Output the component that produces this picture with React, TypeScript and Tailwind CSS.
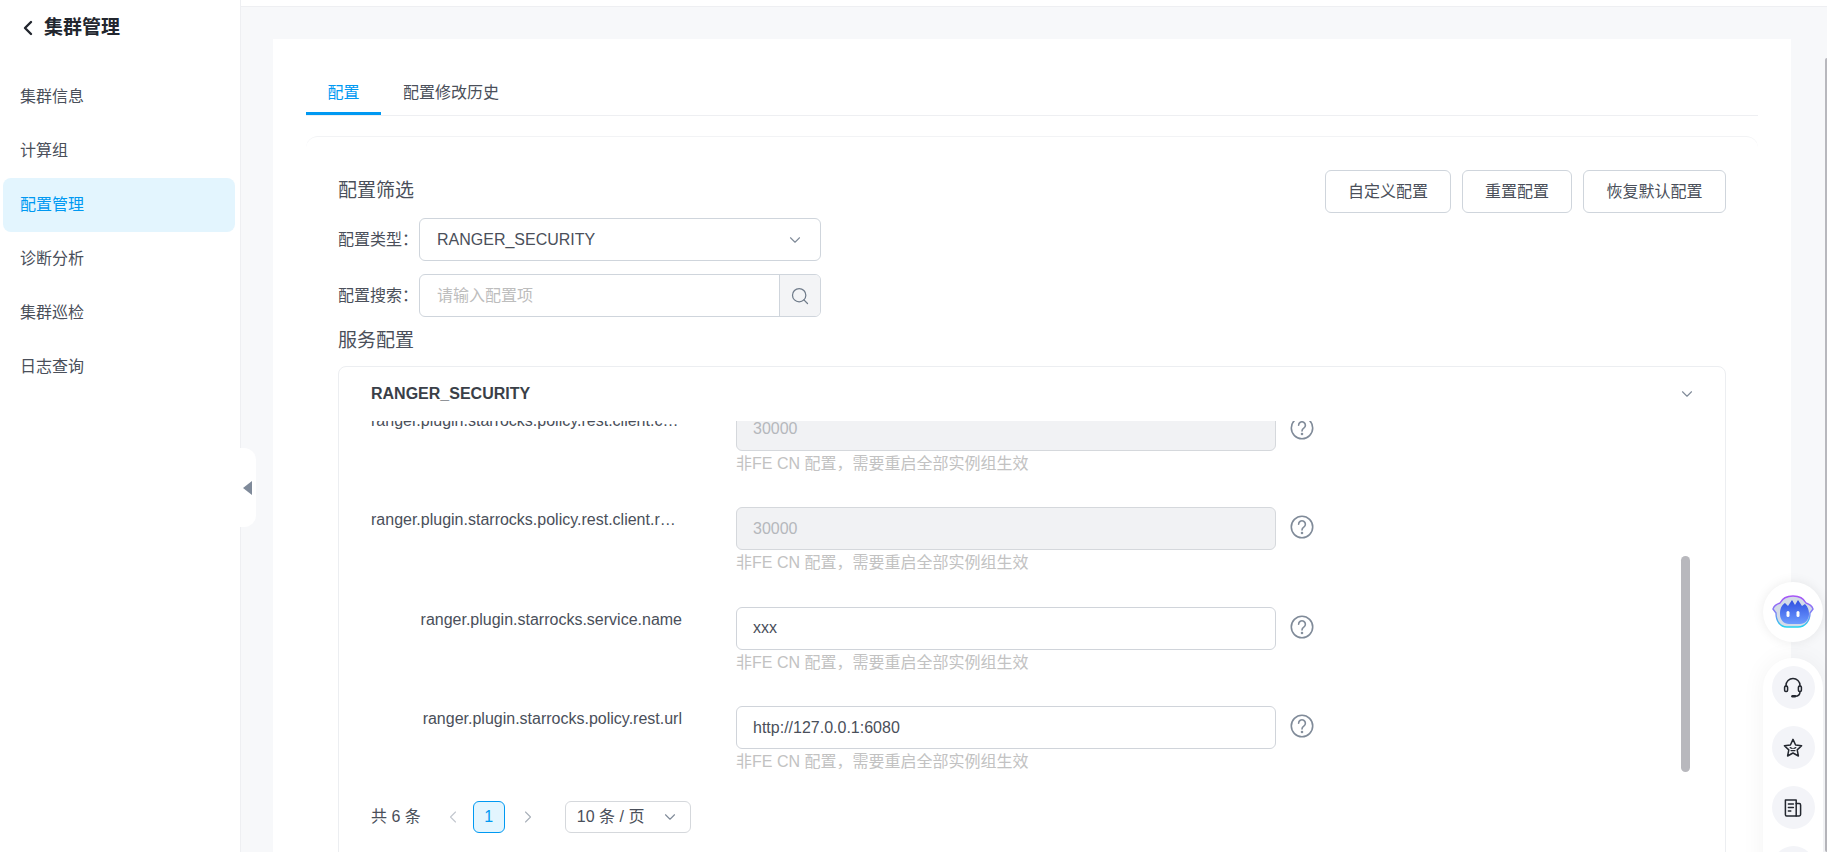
import { ChevronDown, ChevronLeft, ChevronRight, Search } from "lucide-react";

const menuItems = ["集群信息", "计算组", "配置管理", "诊断分析", "集群巡检", "日志查询"];

const configRows = [
  { name: "ranger.plugin.starrocks.policy.rest.client.connection.timeout.ms", value: "30000", disabled: true },
  { name: "ranger.plugin.starrocks.policy.rest.client.read.timeout.ms", value: "30000", disabled: true },
  { name: "ranger.plugin.starrocks.service.name", value: "xxx", disabled: false },
  { name: "ranger.plugin.starrocks.policy.rest.url", value: "http://127.0.0.1:6080", disabled: false },
];

function HelpIcon() {
  return (
    <svg width="24" height="24" viewBox="0 0 24 24" fill="none" stroke="#808b99" strokeWidth="1.6" strokeLinecap="round">
      <circle cx="12" cy="12" r="10.7" />
      <path d="M8.6 9.2a3.4 3.4 0 1 1 5.2 2.9c-1.2.8-1.8 1.4-1.8 2.9" />
      <circle cx="12" cy="18" r="0.5" fill="#808b99" />
    </svg>
  );
}

function BotLogo() {
  return (
    <svg width="42" height="34" viewBox="0 0 42 34">
      <defs>
        <linearGradient id="rim" x1="0" y1="0" x2="0" y2="1">
          <stop offset="0" stopColor="#a855f7" />
          <stop offset="0.55" stopColor="#7c83f5" />
          <stop offset="1" stopColor="#22d3ee" />
        </linearGradient>
        <linearGradient id="face" x1="0" y1="0" x2="0" y2="1">
          <stop offset="0" stopColor="#2f4fe0" />
          <stop offset="1" stopColor="#6d9bff" />
        </linearGradient>
      </defs>
      <path
        d="M21 1c6 0 11 3 13 7 3 1 6 3 7 6l-3 4c0 8-5 14-12 14H15C8 32 4 26 4 18l-3-4c1-3 4-5 7-6 2-4 7-7 13-7z"
        fill="#d3dbe8"
        stroke="url(#rim)"
        strokeWidth="1.4"
      />
      <path
        d="M8 19c0-6 2-9 5-11l3 3 4-6 3 5 3-5 4 6 3-2c3 3 4 6 4 10 0 6-4 10-9 10H17c-5 0-9-4-9-10z"
        fill="url(#face)"
      />
      <rect x="14.5" y="16" width="3" height="6" rx="1.5" fill="#fff" />
      <rect x="24.5" y="16" width="3" height="6" rx="1.5" fill="#fff" />
    </svg>
  );
}

function HeadsetIcon() {
  return (
    <svg width="22" height="22" viewBox="0 0 22 22" fill="none" stroke="#23272f" strokeWidth="1.5" strokeLinecap="round">
      <path d="M4 9.5V8.5a7 7 0 0 1 14 0v1" />
      <rect x="2.6" y="9" width="3" height="5.4" rx="1.2" />
      <rect x="16.4" y="9" width="3" height="5.4" rx="1.2" />
      <path d="M18 14.5c0 3-2 4.8-5 4.8" />
      <path d="M10.4 19.3h2.6" strokeWidth="2.4" />
    </svg>
  );
}

function StarIcon() {
  return (
    <svg width="22" height="22" viewBox="0 0 22 22" fill="none" stroke="#23272f" strokeWidth="1.5" strokeLinejoin="round" strokeLinecap="round">
      <path d="M11 2.4l2.6 5.6 6 .7-4.4 4.2 1.2 6.1L11 16l-5.4 3 1.2-6.1L2.4 8.7l6-.7z" />
      <path d="M8.2 10.6l2 .9M13.8 10.6l-2 .9M9 13.6h4" strokeWidth="1.2" />
    </svg>
  );
}

function NewsIcon() {
  return (
    <svg width="22" height="22" viewBox="0 0 22 22" fill="none" stroke="#23272f" strokeWidth="1.5" strokeLinecap="round" strokeLinejoin="round">
      <path d="M3.4 3h10.8v16H4.6a1.2 1.2 0 0 1-1.2-1.2z" />
      <path d="M14.2 6.5h3a1.4 1.4 0 0 1 1.4 1.4v9.7a1.4 1.4 0 0 1-1.4 1.4h-3" />
      <path d="M6.4 7h5M6.4 10.5h5M6.4 14h2.4" />
    </svg>
  );
}

function OutlineButton({ label, width }: { label: string; width: string }) {
  return (
    <button className={`h-[43px] ${width} rounded-md border border-[#cfd5dc] bg-white text-base text-[#4a4f5a]`}>
      {label}
    </button>
  );
}

function ConfigRow({ name, value, disabled }: { name: string; value: string; disabled: boolean }) {
  return (
    <div className="flex h-[99.5px] items-start">
      <div className="w-[316px] truncate pr-[5px] text-right text-base leading-[26px] text-[#4a4f5a]">{name}</div>
      <div className="ml-[49px] w-[540px]">
        <div
          className={
            disabled
              ? "flex h-[43px] items-center rounded-md border border-[#d5d8dc] bg-[#f1f2f4] px-4 text-base text-[#b5b8bc]"
              : "flex h-[43px] items-center rounded-md border border-[#d0d4da] bg-white px-4 text-base text-[#4a4f5a]"
          }
        >
          {value}
        </div>
        <div className="text-base leading-[26px] whitespace-nowrap text-[#c2c2c2]">非FE CN 配置，需要重启全部实例组生效</div>
      </div>
      <div className="mt-2 ml-[14px]">
        <HelpIcon />
      </div>
    </div>
  );
}

export default function App() {
  return (
    <div className="relative flex h-[852px] w-full overflow-hidden bg-[#f7f8fa] text-[#4a4f5a] [font-family:'Liberation_Sans','Noto_Sans_CJK_SC',sans-serif]">
      <aside className="w-[241px] shrink-0 border-r border-[#eeeff2] bg-white">
        <div className="flex h-[56px] items-center pl-[16px]">
          <ChevronLeft size={24} strokeWidth={2.4} className="text-[#22262e]" />
          <span className="ml-1 text-[19px] font-bold text-[#22262e]">集群管理</span>
        </div>
        <nav className="mt-[14px] px-[3px]">
          {menuItems.map((item) => (
            <div
              key={item}
              className={
                item === "配置管理"
                  ? "flex h-[54px] w-[232px] items-center rounded-lg bg-[#e3f5fe] pl-[17px] text-base text-[#0099f2]"
                  : "flex h-[54px] w-[232px] items-center pl-[17px] text-base text-[#4a4f5a]"
              }
            >
              {item}
            </div>
          ))}
        </nav>
      </aside>

      <main className="min-w-0 flex-1">
        <div className="h-[7px] border-b border-[#eeeff2] bg-white" />
        <div className="mt-[32px] ml-[32px] h-[813px] w-[1518px] bg-white px-[33px]">
          <div className="flex h-[77px] items-end border-b border-[#eeeff2]">
            <div className="flex h-[38px] w-[75px] justify-center border-b-[3px] border-[#0099f2] pt-[4px] text-base text-[#0099f2]">
              配置
            </div>
            <div className="ml-[22px] h-[38px] pt-[4px] text-base text-[#4a4f5a]">配置修改历史</div>
          </div>

          <section className="mt-[20px] h-[716px] rounded-t-xl border-t border-[#f2f3f5] px-[32px] pt-[33px]">
            <div className="flex items-center justify-between">
              <h2 className="text-[19px] font-normal text-[#4a4f5a]">配置筛选</h2>
              <div className="flex gap-[11px]">
                <OutlineButton label="自定义配置" width="w-[126px]" />
                <OutlineButton label="重置配置" width="w-[110px]" />
                <OutlineButton label="恢复默认配置" width="w-[143px]" />
              </div>
            </div>

            <div className="mt-[5px] flex items-center">
              <span className="w-[81px] text-base whitespace-nowrap">配置类型：</span>
              <div className="flex h-[43px] w-[402px] items-center justify-between rounded-md border border-[#cfd5dc] pr-[16px] pl-[17px] text-base">
                RANGER_SECURITY
                <ChevronDown size={18} strokeWidth={1.5} className="text-[#808b99]" />
              </div>
            </div>

            <div className="mt-[13px] flex items-center">
              <span className="w-[81px] text-base whitespace-nowrap">配置搜索：</span>
              <div className="flex h-[43px] w-[402px] items-center overflow-hidden rounded-md border border-[#cfd5dc]">
                <span className="flex-1 pl-[17px] text-base text-[#bdbdbd]">请输入配置项</span>
                <span className="flex h-full w-[41px] items-center justify-center border-l border-[#cfd5dc] bg-[#f3f4f6]">
                  <Search size={20} strokeWidth={1.5} className="text-[#6f7b8a]" />
                </span>
              </div>
            </div>

            <h2 className="flex h-[49px] items-center text-[19px] font-normal text-[#4a4f5a]">服务配置</h2>

            <div className="h-[600px] rounded-lg border border-[#eceef1]">
              <div className="flex h-[54px] items-center justify-between pr-[29px] pl-[32px]">
                <span className="text-base font-bold text-[#3a3f48]">RANGER_SECURITY</span>
                <ChevronDown size={18} strokeWidth={1.5} className="text-[#808b99]" />
              </div>
              <div className="relative h-[364px] overflow-hidden pl-[32px]">
                <div className="-mt-[13.5px]">
                  {configRows.map((row) => (
                    <ConfigRow key={row.name} {...row} />
                  ))}
                </div>
                <div className="absolute top-[135px] right-[35px] h-[216px] w-[9px] rounded-full bg-[#b8b8bd]" />
              </div>
              <div className="mt-[16px] flex h-[32px] items-center pl-[32px] text-base">
                <span className="whitespace-nowrap">共 6 条</span>
                <ChevronLeft size={20} strokeWidth={1.3} className="ml-[22px] text-[#c2c7ce]" />
                <span className="ml-[10px] flex h-[32px] w-[32px] items-center justify-center rounded-md border border-[#0099f2] bg-[#e3f5fe] text-[#0099f2]">
                  1
                </span>
                <ChevronRight size={20} strokeWidth={1.3} className="ml-[13px] text-[#a9b0b9]" />
                <div className="ml-[27px] flex h-[32px] w-[126px] items-center justify-between rounded-md border border-[#d5d8dc] pr-[11px] pl-[11px]">
                  10 条 / 页
                  <ChevronDown size={18} strokeWidth={1.5} className="text-[#808b99]" />
                </div>
              </div>
            </div>
          </section>
        </div>
      </main>

      {/* sidebar collapse handle */}
      <div className="absolute top-[448px] left-[240px] flex h-[79px] w-[16px] items-center rounded-r-xl bg-white pl-[3px]">
        <span className="h-0 w-0 border-y-[7px] border-r-[9px] border-y-transparent border-r-[#7f8a9a]" />
      </div>

      {/* page scrollbar */}
      <div className="absolute top-[58px] right-0 h-[794px] w-[2px] rounded-l bg-[#b8b8bd]" />

      {/* floating tools */}
      <div className="absolute top-[582px] right-[4px] flex h-[60px] w-[60px] items-center justify-center rounded-full bg-white shadow-[0_0_12px_rgba(0,0,0,0.08)]">
        <BotLogo />
      </div>
      <div className="absolute top-[658px] right-[4px] flex h-[260px] w-[60px] flex-col items-center gap-[17px] rounded-full bg-white pt-[8px] shadow-[0_0_24px_rgba(0,0,0,0.05)]">
        <span className="flex h-[43px] w-[43px] items-center justify-center rounded-full bg-[#f3f4f8]">
          <HeadsetIcon />
        </span>
        <span className="flex h-[43px] w-[43px] items-center justify-center rounded-full bg-[#f3f4f8]">
          <StarIcon />
        </span>
        <span className="flex h-[43px] w-[43px] items-center justify-center rounded-full bg-[#f3f4f8]">
          <NewsIcon />
        </span>
        <span className="h-[43px] w-[43px] rounded-full bg-[#f3f4f8]" />
      </div>
    </div>
  );
}
